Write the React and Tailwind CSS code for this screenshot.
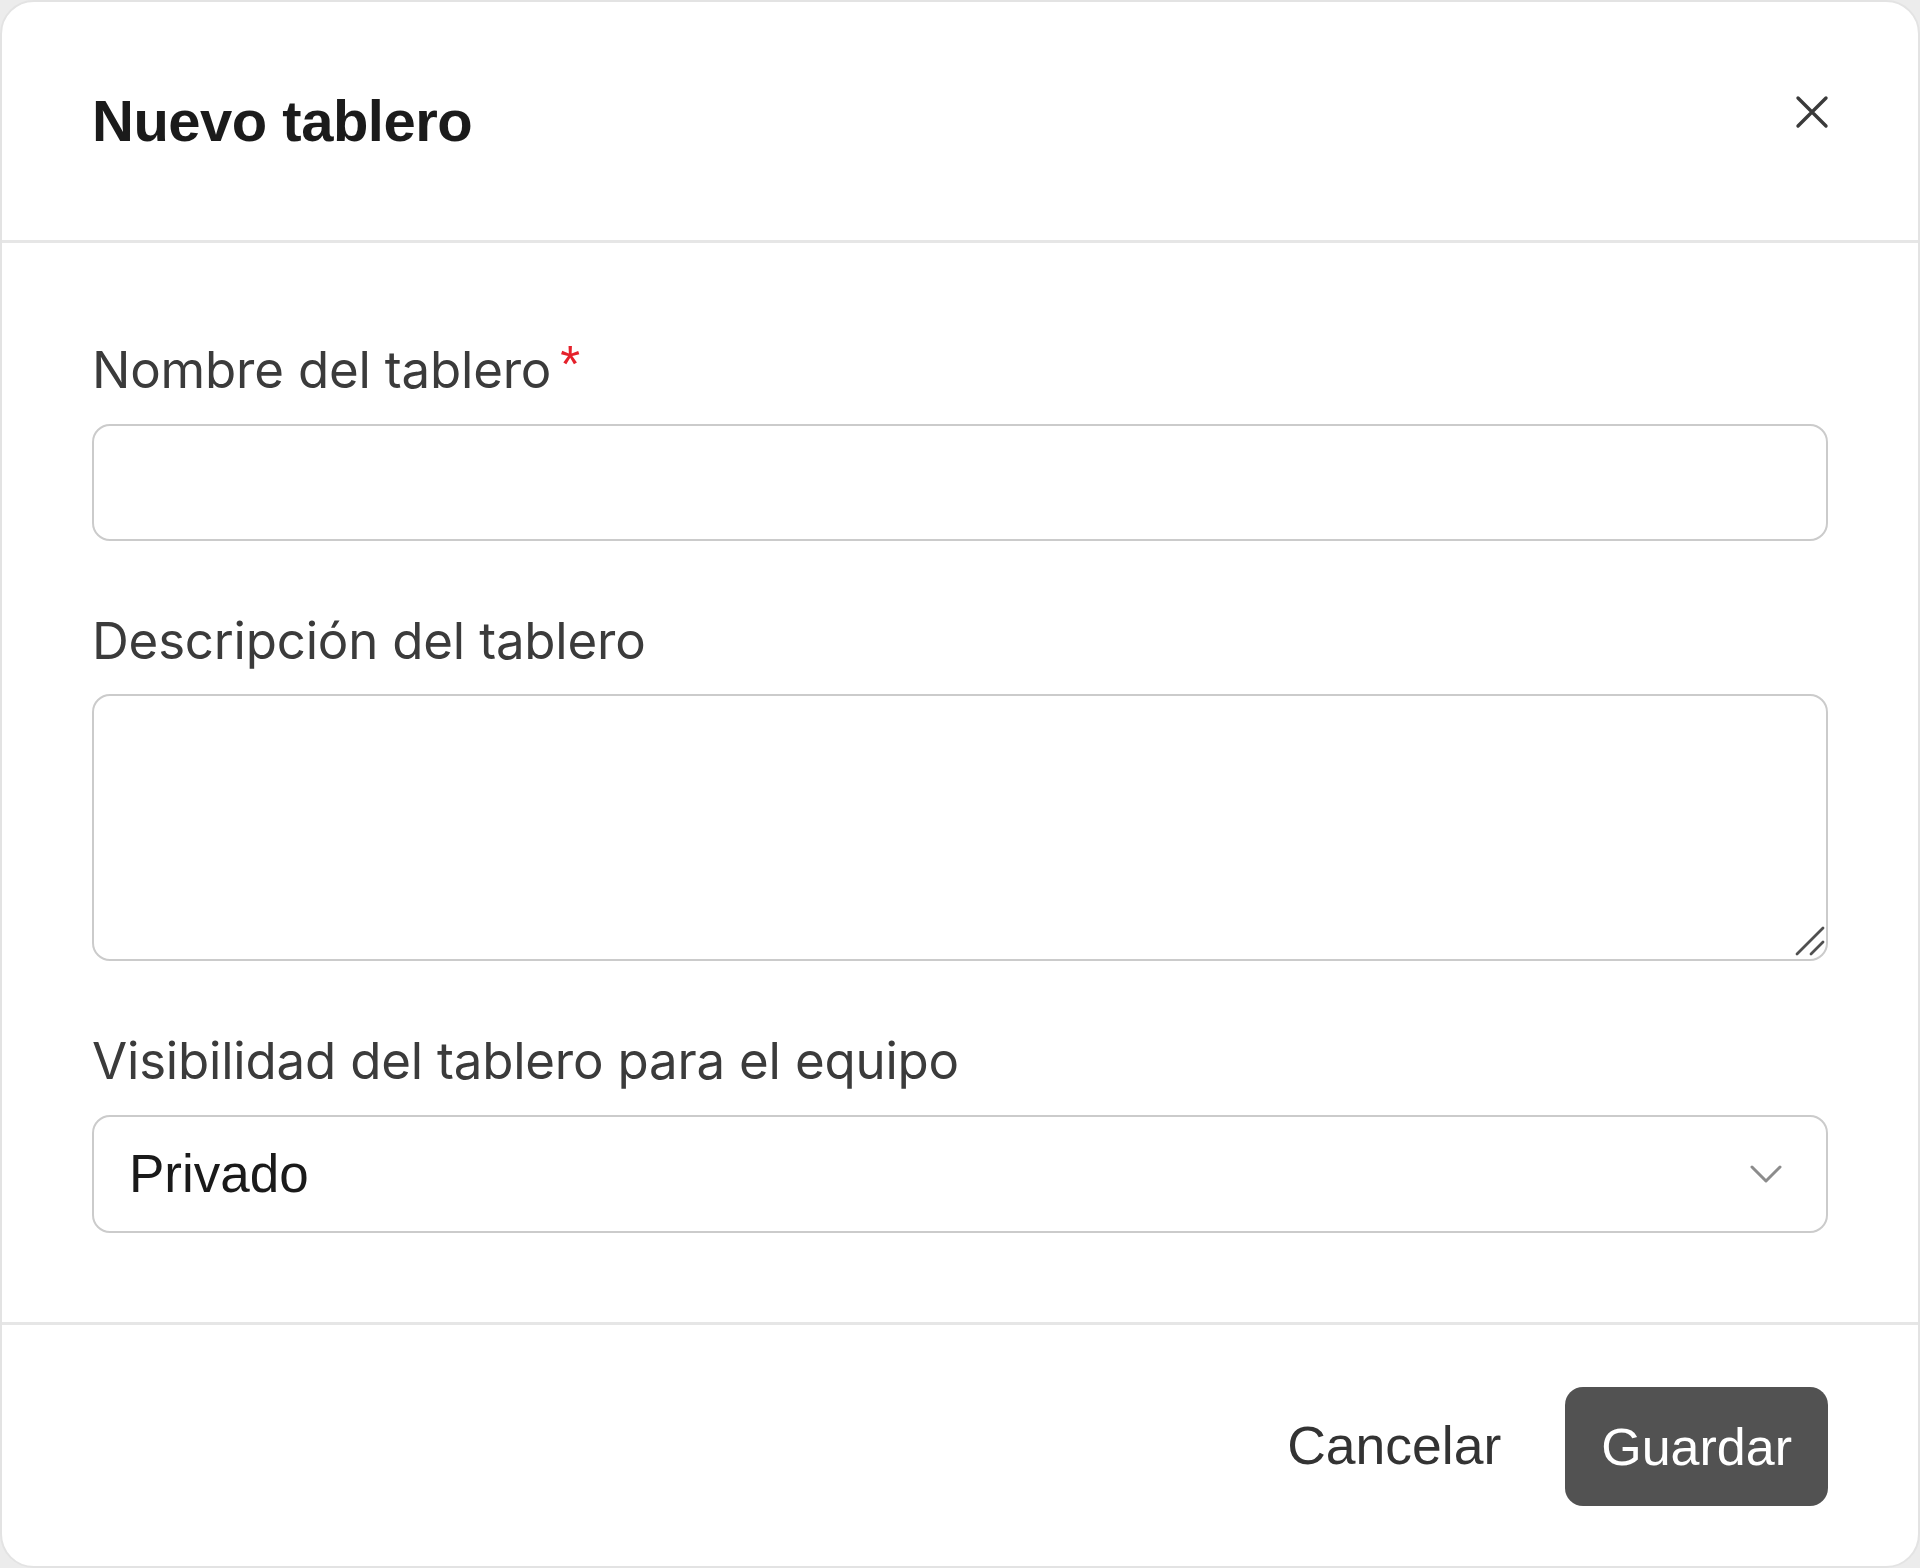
import React from "react";

const labelCls =
  "block text-[51px] leading-[60px] text-[#3b3b3b] font-['Inter',sans-serif] tracking-[-0.2px]";

const CloseIcon = () => (
  <svg width="34" height="34" viewBox="0 0 34 34" fill="none">
    <path
      d="M3 3 L31 31 M31 3 L3 31"
      stroke="#3a3a3a"
      strokeWidth="3.4"
      strokeLinecap="round"
    />
  </svg>
);

const Chevron = () => (
  <svg width="32" height="18" viewBox="0 0 32 18" fill="none">
    <path
      d="M2 2 L16 16 L30 2"
      stroke="#8c8c8c"
      strokeWidth="3"
      strokeLinecap="round"
      strokeLinejoin="round"
    />
  </svg>
);

const Grip = () => (
  <svg width="30" height="30" viewBox="0 0 30 30" fill="none">
    <path
      d="M2 28 L28 2 M16 28 L28 16"
      stroke="#505050"
      strokeWidth="2.8"
      strokeLinecap="round"
    />
  </svg>
);

const NewBoardModal = () => {
  return (
    <div className="w-[1920px] h-[1568px] bg-[#ececec]">
      <div className="w-full h-full bg-white border-2 border-[#e3e3e3] rounded-[34px] flex flex-col overflow-hidden">
        {/* Header */}
        <div className="h-[241px] flex items-center justify-between px-[90px] border-b-[3px] border-[#e6e6e6]">
          <h1 className="text-[58px] font-bold text-[#1b1b1b] font-['Liberation_Sans',Arial,sans-serif] tracking-[-0.5px] mt-[-2px]">
            Nuevo tablero
          </h1>
          <button className="w-[44px] h-[44px] flex items-center justify-center mr-[-6px] mb-[18px]">
            <CloseIcon />
          </button>
        </div>

        {/* Body */}
        <div className="px-[90px] pt-[97px] pb-[89px] flex flex-col">
          <label className={labelCls}>
            Nombre del tablero
            <span className="text-[#e5212b] ml-[9px] relative top-[-6px] font-['Liberation_Sans',sans-serif]">*</span>
          </label>
          <input
            type="text"
            className="mt-[23px] h-[117px] w-full rounded-[18px] border-2 border-[#cbcbcb] bg-white px-[36px] text-[50px] outline-none"
          />

          <label className={labelCls + " mt-[70px]"}>Descripción del tablero</label>
          <div className="relative mt-[23px]">
            <textarea className="block h-[267px] w-full resize-none rounded-[18px] border-2 border-[#cbcbcb] bg-white px-[36px] py-[24px] text-[50px] outline-none" />
            <div className="absolute right-[3px] bottom-[5px]">
              <Grip />
            </div>
          </div>

          <label className={labelCls + " mt-[70px]"}>
            Visibilidad del tablero para el equipo
          </label>
          <div className="relative mt-[24px]">
            <select className="block h-[118px] w-full appearance-none rounded-[18px] border-2 border-[#cbcbcb] bg-white pl-[35px] pr-[100px] text-[53px] text-[#1a1a1a] font-['Liberation_Sans',Arial,sans-serif] outline-none">
              <option>Privado</option>
            </select>
            <div className="absolute right-[46px] top-1/2 -translate-y-1/2 pointer-events-none">
              <Chevron />
            </div>
          </div>
        </div>

        {/* Footer */}
        <div className="border-t-[3px] border-[#e6e6e6] flex-1 flex items-start justify-end gap-[28px] px-[90px] pt-[62px]">
          <button className="h-[119px] px-[36px] text-[53.5px] text-[#333] font-['Liberation_Sans',Arial,sans-serif] rounded-[18px]">
            Cancelar
          </button>
          <button className="h-[119px] px-[36px] text-[52px] text-white bg-[#525252] font-['Liberation_Sans',Arial,sans-serif] rounded-[18px]">
            Guardar
          </button>
        </div>
      </div>
    </div>
  );
};

export default function App() {
  return <NewBoardModal />;
}
